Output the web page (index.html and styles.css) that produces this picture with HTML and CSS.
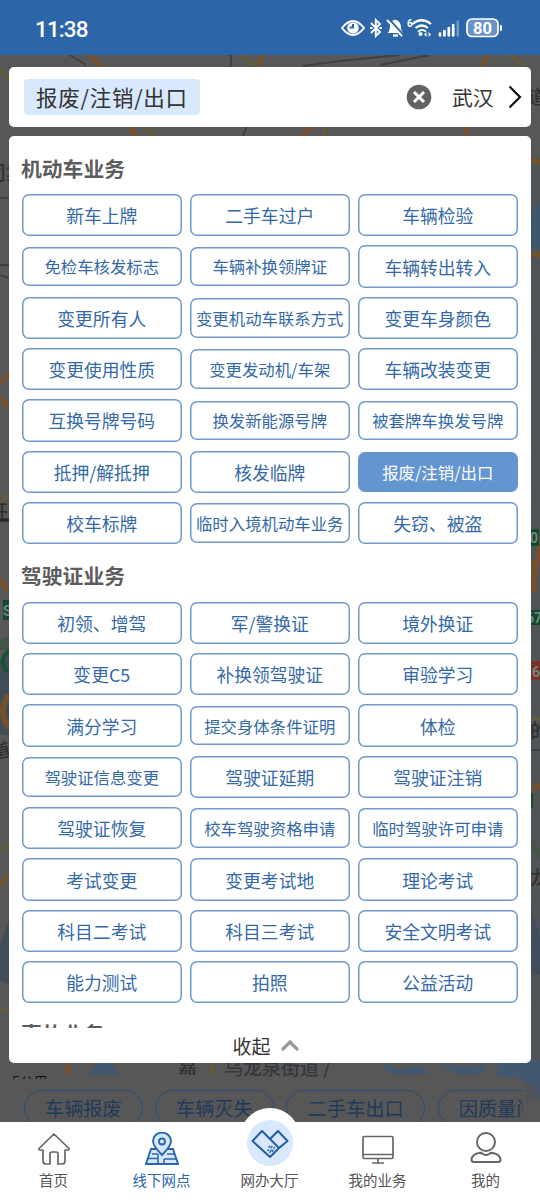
FILE: index.html
```html
<!DOCTYPE html>
<html lang="zh-CN">
<head>
<meta charset="utf-8">
<title>线下网点</title>
<link rel="stylesheet" href="styles.css">
</head>
<body>
<div class="screen">
  <svg class="map" viewBox="0 0 540 1202" fill="none">
    <path d="M540 155L526 160V1100H540Z" fill="#505456"/>
    <path d="M540 200L531 212V248H540Z" fill="#3f566b"/>
    <path d="M0 660L9 650V735H0ZM0 945L9 920V985L0 980ZM531 910L540 935V975H531Z" fill="#404d59"/>
    <g stroke="#75502e" stroke-width="5">
      <path d="M87 54Q97 60 102 70M488 54L480 70M262 54L258 70M128 126L137 138M312 124L302 138M467 126L465 138M531 159L540 163M531 255H540M0 382L9 374M0 398L9 408M0 580L9 592M0 885L9 875M531 790L540 785M69 1060L67 1075"/>
      <path d="M9 695Q-3 710 9 728" stroke-width="6"/>
      <path d="M534 560V592M540 545L532 590"/>
    </g>
    <g stroke="#655c36" stroke-width="3">
      <path d="M0 69L9 80M143 126L157 138M508 54L524 66M240 54L256 66M326 126L324 138M0 504L9 494M0 850L9 845M0 1008L9 1012M531 719H540M212 1063V1075"/>
    </g>
    <path d="M303 66L340 61L400 55M380 65L430 55M70 55L86 65M231 55V67M242 138L247 126M0 198H9M0 265H9M0 275L9 278M531 750H540" stroke="#3e4140" stroke-width="2"/>
    <path d="M0 640L9 635V650H0ZM531 840L540 850V858L531 850Z" fill="#425746"/>
    <path d="M9 651Q-3 660 8 672" stroke="#155135" stroke-width="4"/>
    <path d="M3 600H9V620H3ZM531 529H539V546H531ZM531 610H540V625H531ZM531 793H533V808H531Z" fill="#124a30"/>
    <path d="M531 661H540V680H531Z" fill="#763128"/>
    <path d="M0 520H9" stroke="#252525" stroke-width="3"/>
    <path d="M97 1063H112L119 1074L88 1075ZM384 1063L399 1070L420 1066L430 1074H391L382 1068ZM440 1063L463 1067L488 1064L480 1074H458Z" fill="#425870"/>
    <path d="M500 1063L531 1057L540 1062V1100Q535 1078 505 1077L495 1074Z" fill="#425870"/>
    <g fill="#303030" class="map-text">
      <text x="-13" y="180">司</text><text x="6" y="180">集</text><text x="-11" y="519">开</text><text x="-9" y="758" transform="rotate(-15 0 750)">道</text>
      <text x="528" y="104">道</text><text x="530" y="738">的</text><text x="530" y="885">龙</text>
      <text x="178" y="1073">嘉</text><text x="224" y="1075" fill="#34383c">乌龙泉街道 /</text>
    </g>
    <g fill="#72877b" class="road-text"><text x="3" y="616">S</text><text x="530" y="543">0</text><text x="526" y="623">67</text><text x="532" y="677">6</text></g>
  </svg>

  <header class="status">
    <span class="time">11:38</span>
    <svg class="status-icons" viewBox="0 0 166 24" fill="none">
      <path d="M1 12Q12-2 23 12Q12 26 1 12Z" stroke="#fff" stroke-width="2"/><circle cx="12" cy="12" r="5.800" fill="#fff"/><path d="M12 8V11.500H8.500" stroke="#2c65a8" stroke-width="2"/>
      <path d="M30 7L39 16L34.800 20V4L39 8L30 17" stroke="#fff" stroke-width="1.900"/><path d="M29 12H31.500M38.500 12H41" stroke="#fff" stroke-width="1.900"/>
      <path d="M46.500 17Q49 15 49 10Q49.500 5 53 4Q56 3 59 7Q60 9 60 13L62 17Z" fill="#fff"/><path d="M52 19.500H57" stroke="#fff" stroke-width="2.200"/><path d="M47 2L63 19.500" stroke="#2c65a8" stroke-width="2"/><path d="M46 4L61 20" stroke="#fff" stroke-width="1.900"/>
      <text x="66" y="11" class="wifi-six">6</text>
      <path d="M71.500 8Q80.500 .500 90 8M74.500 12Q81 7 87 12" stroke="#fff" stroke-width="2.200"/><path d="M77 15.500Q81 12.500 85 15.500" stroke="#fff" stroke-width="2"/><circle cx="79.500" cy="18" r="2" fill="#fff"/><path d="M83 18.500L85.500 16V21ZM90 18.500L87.500 16V21Z" fill="#fff"/>
      <path d="M99 17.500V19.500M103.400 15V19.500M107.800 12V19.500M112.200 9V19.500" stroke="#fff" stroke-width="2.700" stroke-linecap="round"/><path d="M116.800 5.500V19.500" stroke="#7199c6" stroke-width="2.500" stroke-linecap="round"/>
      <rect x="126" y="3" width="31" height="17.500" rx="5" fill="#6b94c4" stroke="#fff" stroke-width="1.700"/><path d="M160 10V14" stroke="#fff" stroke-width="2" stroke-linecap="round"/><text x="132" y="17.800" class="battery-level">80</text>
    </svg>
  </header>

  <section class="search">
    <span class="tag">报废/注销/出口</span>
    <svg class="clear" viewBox="0 0 26 26"><circle cx="13" cy="13" r="12.300" fill="#626262"/><path d="M8 8L18 18M18 8L8 18" stroke="#fff" stroke-width="3"/></svg>
    <span class="city">武汉</span>
    <svg class="chevron" viewBox="0 0 14 24"><path d="M1.500 1.500L12 12L1.500 22.500" fill="none" stroke="#111" stroke-width="2.200"/></svg>
  </section>

  <main class="panel">
    <div class="scroll">
      <h2>机动车业务</h2>
      <div class="grid">
        <button>新车上牌</button><button>二手车过户</button><button>车辆检验</button>
        <button class="small">免检车核发标志</button><button class="small">车辆补换领牌证</button><button>车辆转出转入</button>
        <button>变更所有人</button><button class="small">变更机动车联系方式</button><button>变更车身颜色</button>
        <button>变更使用性质</button><button class="small">变更发动机/车架</button><button>车辆改装变更</button>
        <button>互换号牌号码</button><button class="small">换发新能源号牌</button><button class="small">被套牌车换发号牌</button>
        <button>抵押/解抵押</button><button>核发临牌</button><button class="small selected">报废/注销/出口</button>
        <button>校车标牌</button><button class="small">临时入境机动车业务</button><button>失窃、被盗</button>
      </div>
      <h2>驾驶证业务</h2>
      <div class="grid">
        <button>初领、增驾</button><button>军/警换证</button><button>境外换证</button>
        <button>变更C5</button><button>补换领驾驶证</button><button>审验学习</button>
        <button>满分学习</button><button class="small">提交身体条件证明</button><button>体检</button>
        <button class="small">驾驶证信息变更</button><button>驾驶证延期</button><button>驾驶证注销</button>
        <button>驾驶证恢复</button><button class="small">校车驾驶资格申请</button><button class="small">临时驾驶许可申请</button>
        <button>考试变更</button><button>变更考试地</button><button>理论考试</button>
        <button>科目二考试</button><button>科目三考试</button><button>安全文明考试</button>
        <button>能力测试</button><button>拍照</button><button>公益活动</button>
      </div>
      <h2 class="next">事故业务</h2>
    </div>
    <div class="collapse">收起<svg viewBox="0 0 18 12"><path d="M2 10L9 3L16 10" fill="none" stroke="#999" stroke-width="3.200" stroke-linecap="round"/></svg></div>
  </main>

  <div class="scale"><span>5公里</span></div>
  <div class="chips"><span>车辆报废</span><span>车辆灭失</span><span class="wide">二手车出口</span><span>因质量问题退车</span></div>

  <nav class="nav">
    <a><svg viewBox="0 0 34 34" fill="none" stroke="#666" stroke-width="1.700" stroke-linejoin="round"><path d="M17 2L2 16.500Q1.500 18 3 18H6V29Q6 32 9 32H13V22Q13 20 15 20H19Q21 20 21 22V32H25Q28 32 28 29V18H31Q32.500 18 32 16.500Z"/></svg>首页</a>
    <a class="active"><svg viewBox="0 0 34 34" fill="none" stroke="#2866ad" stroke-width="1.900"><path d="M6 17H28L33 32H1Z" fill="#d8e8fb"/><path d="M3 26.500H13M19 27H31M13 22V32M19 32V27M7 22H13M22 22H30" stroke-width="1.500"/><path d="M17 23Q8 14 8 9A9 8.500 0 0 1 26 9Q26 14 17 23Z" fill="#d8e8fb"/><circle cx="17" cy="9.500" r="3"/></svg>线下网点</a>
    <a class="hall"><span class="dome"></span><span class="disc"><svg viewBox="0 0 38 30" fill="none" stroke="#1f5ba2" stroke-width="1.900" stroke-linejoin="round"><path d="M1.500 13L11 3L28 20L19 29L1.500 13ZM19 11L27 3L36.500 13L28 20"/><path d="M16.500 23L18 21.500M18.500 25L20.500 21.500M17.500 19.500L19 18M21 24L22.500 21.500M19.500 20L21.500 18M22.500 20.500L24 19" stroke-width="1.300"/></svg></span>网办大厅</a>
    <a><svg viewBox="0 0 34 34" fill="none" stroke="#666" stroke-width="1.700"><rect x="2" y="4.500" width="30" height="22" rx="1.500"/><path d="M2 22.500H32M17 27V31M11 31H23"/></svg>我的业务</a>
    <a><svg viewBox="0 0 34 34" fill="none" stroke="#666" stroke-width="2"><circle cx="17" cy="10" r="9"/><path d="M10 21Q12 20.500 14 22Q17 24 20 22Q22 20.500 24 21Q31 22.500 31.500 27.500Q31.500 30 29 30H5Q2.500 30 2.500 27.500Q3 22.500 10 21Z"/></svg>我的</a>
  </nav>
</div>
</body>
</html>
```
FILE: styles.css
```css
* { box-sizing: border-box; }
body { margin: 0; font-family: "Noto Sans CJK SC", sans-serif; }
.screen { position: relative; width: 540px; height: 1202px; overflow: hidden; background: #575757; display: flex; flex-direction: column; }
.screen > * { flex-shrink: 0; }
.map { position: absolute; inset: 0; width: 540px; height: 1202px; }
.map-text { font-size: 19px; font-weight: 500; }
.road-text { font: 700 14px Roboto, sans-serif; }
.status { position: relative; height: 55px; background: #2c65a8; padding: 16px 33px 0 35px; display: flex; justify-content: space-between; }
.time { font: 500 22.500px/26px Roboto, sans-serif; letter-spacing: -0.900px; color: #fff; }
.status-icons { width: 166px; height: 24px; }
.wifi-six { font: 700 10px Roboto, sans-serif; fill: #fff; }
.battery-level { font: 700 16.500px Roboto, sans-serif; fill: #fff; }
.search { position: relative; margin: 12px 9px 0; height: 60px; border-radius: 5px; background: #fff; display: flex; align-items: center; padding: 0 9px 0 15px; color: #333; font-size: 20.800px; }
.tag { height: 36px; width: 176px; padding-left: 12px; line-height: 36px; font-size: 21.500px; letter-spacing: 0.750px; background: #d8e8fd; border-radius: 4px; white-space: nowrap; }
.clear { width: 26px; height: 26px; margin-left: auto; margin-right: 20px; }
.city { width: 42px; white-space: nowrap; }
.chevron { width: 14px; height: 24px; margin-left: 14px; }
.panel { position: relative; margin: 9px 9px 0; height: 927px; border-radius: 5px; background: #fff; display: flex; flex-direction: column; }
.scroll { height: 891.500px; overflow: hidden; padding: 0 13px; }
h2 { margin: 0 0 0 -1px; padding-top: 17px; height: 58px; font-size: 20.800px; line-height: 31px; font-weight: 700; color: #5d5d5d; }
.grid + h2 { height: 57.400px; padding-top: 16px; }
.grid + h2.next { padding-top: 14.500px; }
.grid { display: grid; grid-template-columns: repeat(3, 159.500px); column-gap: 8.500px; grid-auto-rows: 42.330px; row-gap: 9px; align-items: center; height: 350.300px; }
.grid ~ .grid { height: 401.700px; }
button { height: 42.600px; padding: 0; border: 0; box-shadow: inset 0 0 0 1.500px #7299cb; border-radius: 7px; background: #fff; color: #3469a8; font: 400 17.800px "Noto Sans CJK SC", sans-serif; white-space: nowrap; }
button.small { height: 39.600px; font-size: 16.400px; }
button.selected { box-shadow: none; background: #6395d1; color: #fff; }
.collapse { height: 35.500px; display: flex; align-items: center; justify-content: center; gap: 10px; padding-right: 9px; color: #333; font-size: 19px; }
.collapse svg { width: 18px; height: 12px; }
.scale { position: relative; height: 16px; overflow: hidden; padding: 9px 0 0 12px; font-size: 14px; line-height: 18px; color: #111; }
.chips { position: relative; height: 43px; width: 523px; padding: 11px 0 0 24px; display: flex; gap: 12.300px; overflow: hidden; }
.chips span { flex-shrink: 0; height: 36px; padding: 0 20px; border: 1px solid #294e78; border-radius: 18px; color: #213a5a; font-size: 19.200px; line-height: 35px; }
.chips .wide { padding: 0 20.700px; }
.nav { position: relative; height: 80px; background: #fff; display: grid; grid-template-columns: repeat(5, 108px); padding-left: 0; }
.nav a { position: relative; display: flex; flex-direction: column; align-items: center; padding: 10px 1px 0 0; font-size: 14.500px; line-height: 24px; gap: 2px; color: #555; }
.nav svg { width: 34px; height: 34px; }
.nav .active { color: #2866ad; }
.dome { position: absolute; top: -14px; left: 24px; width: 60px; height: 60px; border-radius: 50%; background: #fff; }
.nav .hall { padding-top: 0; gap: 0; }
.disc { position: relative; width: 46px; height: 46px; margin: -2px 0 2px; border-radius: 50%; background: #d8e8fd; display: flex; align-items: center; justify-content: center; }
.nav .disc svg { width: 38px; height: 30px; }
```
